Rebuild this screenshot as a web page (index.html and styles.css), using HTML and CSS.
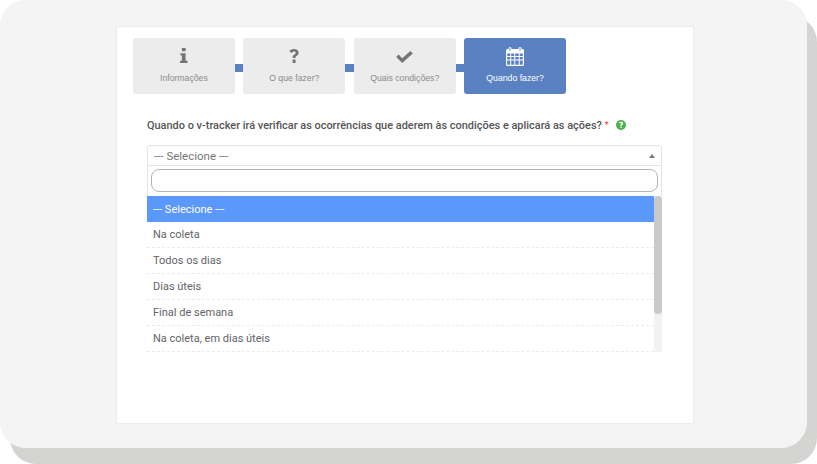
FILE: index.html
```html
<!DOCTYPE html>
<html lang="pt">
<head>
<meta charset="utf-8">
<title>Quando fazer?</title>
<link rel="stylesheet" href="styles.css">
</head>
<body>
<div class="frame">
  <main class="card">
    <nav class="steps">
      <div class="step">
        <svg class="ico ico-i" viewBox="0 0 8 16" width="7.500" height="15"><path fill="currentColor" d="M2 0h4v3.500H2zM.5 5.500H6V13.500h2V16H0v-2.500h2V8H.5z"/></svg>
        <span>Informações</span>
      </div>
      <i class="link"></i>
      <div class="step">
        <svg class="ico ico-q" viewBox="0 0 12 18" width="10" height="14"><path fill="currentColor" d="M6.2 0C9.5 0 12 2 12 4.900c0 2.300-1.400 3.300-2.800 4.200-.9.600-1.300 1-1.300 1.900v.6H4.300v-1c0-1.900 1-2.800 2.200-3.600 1-.7 1.700-1.200 1.700-2.100 0-1-.9-1.600-2.100-1.600-1.300 0-2.200.7-3 1.800L0 3C1.300 1.100 3.300 0 6.200 0zM4.200 13.500h3.800V18H4.200z"/></svg>
        <span>O que fazer?</span>
      </div>
      <i class="link"></i>
      <div class="step">
        <svg class="ico ico-c" viewBox="0 0 18 13" width="17" height="12"><path fill="currentColor" d="M6.500 13L0 6.500l2.600-2.600 3.900 3.900L15.400 0 18 2.600z"/></svg>
        <span>Quais condições?</span>
      </div>
      <i class="link"></i>
      <div class="step active">
        <svg class="ico" viewBox="0 0 18 19" width="18" height="19"><path fill="currentColor" fill-rule="evenodd" d="M4 0a1.500 1.500 0 0 1 1.500 1.500V2h7v-.5a1.500 1.500 0 0 1 3 0V2h1A1.500 1.500 0 0 1 18 3.500v14a1.500 1.500 0 0 1-1.500 1.500h-15A1.500 1.500 0 0 1 0 17.500v-14A1.500 1.500 0 0 1 1.500 2h1v-.5A1.500 1.500 0 0 1 4 0zM1.200 6.500V9h3V6.500zm4 0V9h3V6.500zm4 0V9h3.500V6.500zm4.500 0V9h3.100V6.500zM1.200 10v2.500h3V10zm4 0v2.500h3V10zm4 0v2.500h3.500V10zm4.500 0v2.500h3.100V10zM1.200 13.500V17.800h3v-4.300zm4 0v4.300h3v-4.300zm4 0v4.300h3.500v-4.300zm4.500 0v4.300h3.100v-4.300zM4 1a.5.500 0 0 0-.5.500v2a.5.500 0 0 0 1 0v-2A.5.500 0 0 0 4 1zm10 0a.5.500 0 0 0-.5.500v2a.5.500 0 0 0 1 0v-2A.5.500 0 0 0 14 1z"/></svg>
        <span>Quando fazer?</span>
      </div>
    </nav>

    <section class="field">
      <p class="question">
        <span>Quando o v-tracker irá verificar as ocorrências que aderem às condições e aplicará as ações?</span>
        <b class="req">*</b>
        <svg class="help" viewBox="0 0 12 12" width="10" height="10"><circle cx="6" cy="6" r="6" fill="#4caf50"/><path fill="#fff" d="M6.100 2.200c1.500 0 2.500.8 2.500 2 0 1-.6 1.400-1.200 1.800-.4.300-.6.500-.6.900v.3H5.200v-.5c0-.8.400-1.200 1-1.600.4-.3.700-.5.700-.8 0-.4-.4-.7-.9-.7-.6 0-1 .3-1.300.8L3.500 3.400c.6-.8 1.400-1.200 2.600-1.200zM5.200 8h1.700v1.700H5.200z"/></svg>
      </p>

      <div class="select">
        <div class="select-head">
          <span>--- Selecione ---</span>
          <i class="caret"></i>
        </div>
        <div class="search"><input class="search-input" type="text" aria-label="Buscar"></div>
        <div class="panel">
          <ul class="options">
            <li class="selected">--- Selecione ---</li>
            <li>Na coleta</li>
            <li>Todos os dias</li>
            <li>Dias úteis</li>
            <li>Final de semana</li>
            <li>Na coleta, em dias úteis</li>
          </ul>
          <div class="track"><div class="thumb"></div></div>
        </div>
      </div>
    </section>
  </main>
</div>
</body>
</html>
```
FILE: styles.css
```css
* { box-sizing: border-box; }
html, body { margin: 0; padding: 0; background: #fff; }
body { width: 817px; height: 464px; overflow: hidden; font-family: Roboto, "Liberation Sans", sans-serif; }

.frame {
  width: 807px;
  height: 448px;
  padding: 26px 113px 24px 116px;
  background: #f4f4f4;
  border-radius: 26px;
  box-shadow: 10px 16px 0 #d4d4d2;
}

.card {
  height: 398px;
  padding: 11px 16px 0;
  background: #fff;
  border: 1px solid #ececec;
  border-radius: 2px;
}

.steps { display: flex; align-items: center; width: 433px; }

.step {
  flex: none;
  width: 101.75px;
  height: 56px;
  padding-top: 9px;
  display: flex;
  flex-direction: column;
  align-items: center;
  background: #ececec;
  border-radius: 3px;
  color: #8b8b8b;
  font: 8.7px/11px "Liberation Sans", sans-serif;
}
.step span { margin-top: auto; margin-bottom: 10px; }
.step .ico { color: #757575; flex: none; }
.step .ico-i { margin-top: 1px; }
.step .ico-q { margin-top: 2px; }
.step .ico-c { margin-top: 4px; }
.step.active { background: #5a82c3; color: #fff; }
.step.active .ico { color: #fff; }

.link { flex: none; width: 8.67px; height: 8px; margin-top: 3px; background: #5a82c3; }

.field { padding: 0 14px; margin-top: 24px; width: 543px; }

.question {
  margin: 0 0 13px;
  display: flex;
  align-items: center;
  height: 14px;
  color: #555;
  font: 500 10.95px/15px Roboto, sans-serif;
  white-space: nowrap;
}
.req { margin-left: 3px; color: #e53935; font-weight: 400; font-size: 9px; align-self: flex-start; }
.help { margin-left: 7px; }

.select {
  position: relative;
  width: 515px;
  height: 206px;
  border: 1px solid #e4e4e4;
  border-radius: 3px;
  background: #fff;
}
.select-head {
  height: 20px;
  padding: 0 6px;
  display: flex;
  align-items: center;
  justify-content: space-between;
  border-bottom: 1px solid #e4e4e4;
  color: #777;
  font-size: 11.5px;
}
.caret {
  width: 0;
  height: 0;
  border-left: 3px solid transparent;
  border-right: 3px solid transparent;
  border-bottom: 4px solid #777;
}
.search { padding: 3px 3px 0; }
.search-input {
  display: block;
  width: 100%;
  height: 23px;
  border: 1px solid #b5b5b5;
  border-radius: 8px;
  background: #fff;
  outline: none;
}
.panel {
  position: absolute;
  left: -1px;
  right: -1px;
  top: 50px;
  display: flex;
  height: 156px;
  background: #fff;
}
.options {
  flex: 1;
  margin: 0;
  padding: 0;
  list-style: none;
  color: #5f6368;
  font-size: 11px;
}
.options li {
  height: 26px;
  padding: 0 6px;
  display: flex;
  align-items: center;
  border-bottom: 1px dashed #ececec;
}
.options li.selected { padding-top: 1px; background: #5a98fb; color: #fff; border-bottom: 0; }
.track { flex: none; width: 8px; background: #f2f2f2; }
.thumb { height: 118px; border-radius: 4px; background: #c9c9c9; }
```
